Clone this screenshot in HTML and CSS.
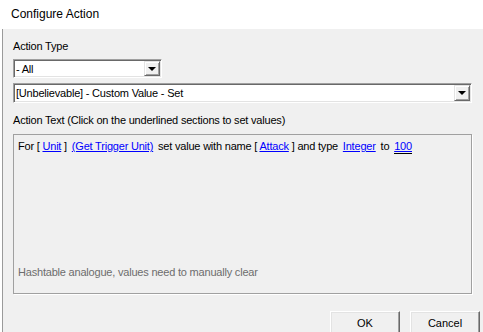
FILE: index.html
```html
<!DOCTYPE html>
<html lang="en">
<head>
    <meta charset="UTF-8">
    <title>Configure Action</title>
    <link rel="stylesheet" href="styles.css">
</head>
<body>
    <div class="title-bar">Configure Action</div>

    <div class="client">
        <div class="label">Action Type</div>
        <div class="combo combo-short">
            <span class="combo-text">- All</span>
            <span class="combo-button"><span class="arrow"></span></span>
        </div>
        <div class="combo combo-wide">
            <span class="combo-text">[Unbelievable] - Custom Value - Set</span>
            <span class="combo-button"><span class="arrow"></span></span>
        </div>

        <div class="label label-text">Action Text (Click on the underlined sections to set values)</div>
        <div class="action-box">
            <div class="action-line">For [ <a class="param">Unit</a> ] <a class="param spaced">(Get Trigger Unit)</a> set value with name [ <a class="param">Attack</a> ] and type <a class="param spaced">Integer</a> to <a class="param spaced focused">100</a></div>
            <div class="hint">Hashtable analogue, values need to manually clear</div>
        </div>

        <div class="buttons">
            <button class="btn">OK</button>
            <button class="btn">Cancel</button>
        </div>
    </div>
</body>
</html>
```

FILE: styles.css
```css
html, body {
    margin: 0;
    padding: 0;
    height: 100%;
    overflow: hidden;
}
body {
    background-color: #fff;
    font-family: 'Liberation Sans', Arial, sans-serif;
    font-size: 11px;
    color: #000;
}
.title-bar {
    height: 29px;
    line-height: 29px;
    padding-left: 11px;
    font-size: 12px;
    background-color: #fff;
}
.client {
    margin-left: 2px;
    border-left: 1px solid #9a9a9a;
    background-color: #f0f0f0;
    padding: 10px 11px 0 10px;
    height: calc(100% - 29px);
    box-sizing: border-box;
    overflow: hidden;
    letter-spacing: -0.2px;
}
.label {
    line-height: 14px;
}
.combo {
    display: flex;
    align-items: stretch;
    height: 19px;
    box-sizing: border-box;
    background-color: #fff;
    border: 1px solid;
    border-color: #a0a0a0 #fff #fff #a0a0a0;
    box-shadow: inset 1px 1px 0 #696969, inset -1px -1px 0 #e3e3e3;
    padding: 1px;
}
.combo-short {
    width: 149px;
    margin-top: 6px;
}
.combo-wide {
    margin-top: 5px;
    height: 20px;
}
.combo-text {
    flex-grow: 1;
    line-height: 16px;
    padding-left: 1px;
}
.combo-button {
    width: 16px;
    display: flex;
    align-items: center;
    justify-content: center;
    background-color: #f0f0f0;
    box-sizing: border-box;
    border: 1px solid;
    border-color: #e3e3e3 #696969 #696969 #e3e3e3;
    box-shadow: inset 1px 1px 0 #fff, inset -1px -1px 0 #a0a0a0;
}
.arrow {
    width: 0;
    height: 0;
    border-left: 4px solid transparent;
    border-right: 4px solid transparent;
    border-top: 4px solid #000;
}
.label-text {
    margin-top: 10px;
}
.action-box {
    margin-top: 7px;
    height: 160px;
    box-sizing: border-box;
    border: 1px solid #a0a0a0;
    box-shadow: 1px 1px 0 #fff;
    padding: 4px 5px 14px 4px;
    display: flex;
    flex-direction: column;
    justify-content: space-between;
}
.action-line {
    line-height: 14px;
    white-space: nowrap;
}
.param {
    color: #0000ff;
    text-decoration: underline;
    cursor: pointer;
}
.spaced {
    margin: 0 2px;
}
.focused {
    padding-bottom: 1px;
    border-bottom: 1px solid #000;
}
.hint {
    line-height: 14px;
    color: #6d6d6d;
}
.buttons {
    display: flex;
    justify-content: flex-end;
    gap: 10px;
    margin-top: 17px;
    margin-right: -8px;
}
.btn {
    width: 70px;
    height: 23px;
    padding: 0;
    font-family: 'Liberation Sans', Arial, sans-serif;
    font-size: 11px;
    color: #000;
    background-color: #f0f0f0;
    border: 1px solid;
    border-color: #fff #696969 #696969 #fff;
    box-shadow: inset -1px -1px 0 #a0a0a0, inset 1px 1px 0 #e3e3e3;
}
```
